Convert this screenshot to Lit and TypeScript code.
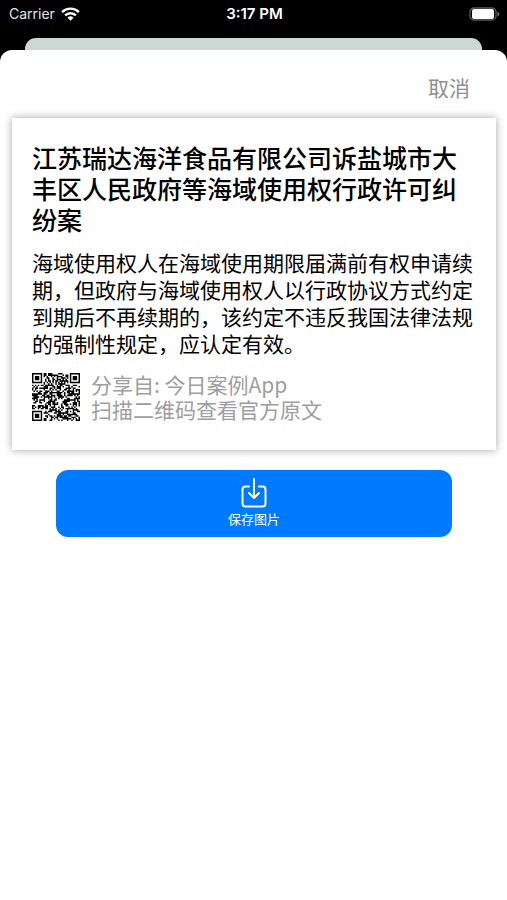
import { LitElement, html, css, svg } from "lit";
import { customElement, property } from "lit/decorators.js";

const QR_SIZE = 33;

/** Is the module at (x, y) part of a finder pattern, and is it dark? */
function finder(x: number, y: number): boolean | undefined {
  const corners = [[0, 0], [QR_SIZE - 7, 0], [0, QR_SIZE - 7]];
  for (const [cx, cy] of corners) {
    const dx = x - cx;
    const dy = y - cy;
    if (dx < -1 || dx > 7 || dy < -1 || dy > 7) continue;
    const ring = Math.max(Math.abs(dx - 3), Math.abs(dy - 3));
    return ring !== 2 && ring !== 4;
  }
  return undefined;
}

function qrPath(): string {
  let seed = 20210317;
  let d = "";
  for (let y = 0; y < QR_SIZE; y++) {
    for (let x = 0; x < QR_SIZE; x++) {
      seed = (Math.imul(seed, 1664525) + 1013904223) >>> 0;
      let dark = (seed >>> 16) % 100 < 53;
      const inAlign = Math.max(Math.abs(x - 26), Math.abs(y - 26));
      if (inAlign <= 2) dark = inAlign !== 1;
      const f = finder(x, y);
      if (f !== undefined) dark = f;
      else if (x === 6 || y === 6) dark = (x + y) % 2 === 0;
      if (dark) d += `M${x} ${y}h1v1h-1z`;
    }
  }
  return d;
}

@customElement("status-bar")
export class StatusBar extends LitElement {
  @property() carrier = "Carrier";
  @property() time = "3:17 PM";

  static styles = css`
    :host {
      display: grid;
      grid-template-columns: 1fr auto 1fr;
      align-items: center;
      height: 28px;
      padding: 0 7px 0 9px;
      color: #fff;
      font: 14px/20px Inter, "Noto Sans", sans-serif;
    }
    .left {
      display: flex;
      align-items: center;
      gap: 6px;
      color: #e4e4e4;
    }
    .time {
      font-size: 15px;
      font-weight: 600;
    }
    .battery {
      justify-self: end;
    }
    svg {
      display: block;
    }
  `;

  render() {
    return html`
      <div class="left">
        <span>${this.carrier}</span>
        <svg width="19" height="14" viewBox="0 0 19 14" aria-hidden="true">
          <path fill="none" stroke="#fff" stroke-width="2.4" d="M1.1 5.1a12 12 0 0 1 16.8 0M4.1 8.4a7.7 7.7 0 0 1 10.8 0" />
          <path fill="#fff" d="M9.5 13.8 6.5 10.7a4.3 4.3 0 0 1 6 0z" />
        </svg>
      </div>
      <span class="time">${this.time}</span>
      <svg class="battery" width="31" height="15" viewBox="0 0 31 15" role="img" aria-label="Battery full">
        <rect x="1" y="1" width="26" height="12" rx="4" fill="none" stroke="#5c5c5c" stroke-width="1.3" />
        <rect x="3" y="2" width="22" height="10" rx="2" fill="#fff" />
        <path d="M28.3 4.500q2.200 1 2.200 2.500t-2.200 2.500z" fill="#666" />
      </svg>
    `;
  }
}

@customElement("case-card")
export class CaseCard extends LitElement {
  @property() heading = "";
  @property() summary = "";
  @property() source = "";

  static styles = css`
    :host {
      display: block;
      padding: 24px 20px 28px;
      background: #fff;
      box-shadow: 0 0 8px rgba(0, 0, 0, 0.36);
    }
    h1 {
      margin: 0;
      font-size: 25px;
      line-height: 31px;
      font-weight: 500;
    }
    .summary {
      margin: 14px 0 0;
      font-size: 21px;
      line-height: 27px;
    }
    .source {
      display: flex;
      align-items: center;
      gap: 11px;
      margin-top: 15px;
      font-size: 21px;
      line-height: 25px;
      color: #9e9e9e;
    }
    .source p {
      margin: 0;
      white-space: pre-line;
    }
    .qr {
      flex: none;
      display: block;
    }
  `;

  render() {
    return html`
      <h1>${this.heading}</h1>
      <p class="summary">${this.summary}</p>
      <div class="source">
        <svg class="qr" width="48" height="48" viewBox="0 0 33 33" role="img" aria-label="二维码">
          ${svg`<path d=${qrPath()} fill="#000" />`}
        </svg>
        <p>${this.source}</p>
      </div>
    `;
  }
}

@customElement("app-root")
export class AppRoot extends LitElement {
  static styles = css`
    :host {
      display: flex;
      flex-direction: column;
      min-height: 100vh;
      background: #000;
      color: #000;
      font-family: "Noto Sans CJK SC", sans-serif;
    }
    .behind {
      height: 12px;
      margin: 10px 25px 0;
      border-radius: 11px 11px 0 0;
      background: #cbd8d6;
    }
    .sheet {
      flex: 1;
      display: flex;
      flex-direction: column;
      padding: 22px 11px 20px 12px;
      border-radius: 12px 12px 0 0;
      background: #fff;
    }
    button {
      border: 0;
      font-family: inherit;
      cursor: pointer;
    }
    .cancel {
      align-self: flex-end;
      margin-right: 26px;
      padding: 0;
      background: none;
      color: #8e8e8e;
      font-size: 21px;
      line-height: 30px;
    }
    case-card {
      margin-top: 16px;
    }
    .save {
      display: flex;
      flex-direction: column;
      align-items: center;
      gap: 2px;
      margin: 20px 44px 0;
      padding: 8px 0 9px;
      border-radius: 12px;
      background: #007aff;
      color: #fff;
      font-size: 13px;
      line-height: 18px;
    }
  `;

  render() {
    return html`
      <status-bar></status-bar>
      <div class="behind"></div>
      <main class="sheet">
        <button class="cancel" type="button">取消</button>
        <case-card
          heading="江苏瑞达海洋食品有限公司诉盐城市大丰区人民政府等海域使用权行政许可纠纷案"
          summary="海域使用权人在海域使用期限届满前有权申请续期，但政府与海域使用权人以行政协议方式约定到期后不再续期的，该约定不违反我国法律法规的强制性规定，应认定有效。"
          .source=${"分享自: 今日案例App\n扫描二维码查看官方原文"}
        ></case-card>
        <button class="save" type="button">
          <svg width="26" height="30" viewBox="0 0 26 30" fill="none" stroke="#fff" stroke-width="2" stroke-linecap="round" stroke-linejoin="round" aria-hidden="true">
            <path d="M8 8.500H4.500Q1.500 8.500 1.500 11.500V25.500Q1.500 28.500 4.500 28.500H21.500Q24.500 28.500 24.500 25.500V11.500Q24.500 8.500 21.500 8.500H18" />
            <path d="M13 1V19.500M8 15l5 5 5-5" />
          </svg>
          <span>保存图片</span>
        </button>
      </main>
    `;
  }
}
